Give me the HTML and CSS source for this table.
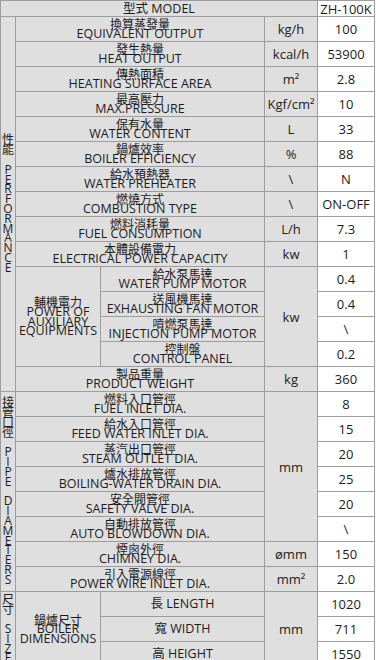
FILE: index.html
```html
<!DOCTYPE html>
<html lang="zh-Hant">
<head>
<meta charset="utf-8">
<title>型式 MODEL ZH-100K</title>
<link rel="stylesheet" href="styles.css">
</head>
<body>
<div class="sheet">
  <div class="cell model span-c4">型式 MODEL</div>
  <div class="cell val model-val">ZH-100K</div>

  <div class="cell side rows-perf">性<br>能<br><br>P<br>E<br>R<br>F<br>O<br>R<br>M<br>A<br>N<br>C<br>E</div>
  <div class="cell label span-c2"><span class="zh">換算蒸發量</span><span class="en">EQUIVALENT OUTPUT</span></div>
  <div class="cell unit">kg/h</div>
  <div class="cell val">100</div>

  <div class="cell label span-c2"><span class="zh">發生熱量</span><span class="en">HEAT OUTPUT</span></div>
  <div class="cell unit">kcal/h</div>
  <div class="cell val">53900</div>

  <div class="cell label span-c2"><span class="zh">傳熱面積</span><span class="en">HEATING SURFACE AREA</span></div>
  <div class="cell unit">m²</div>
  <div class="cell val">2.8</div>

  <div class="cell label span-c2"><span class="zh">最高壓力</span><span class="en">MAX.PRESSURE</span></div>
  <div class="cell unit">Kgf/cm²</div>
  <div class="cell val">10</div>

  <div class="cell label span-c2"><span class="zh">保有水量</span><span class="en">WATER CONTENT</span></div>
  <div class="cell unit">L</div>
  <div class="cell val">33</div>

  <div class="cell label span-c2"><span class="zh">鍋爐效率</span><span class="en">BOILER EFFICIENCY</span></div>
  <div class="cell unit">%</div>
  <div class="cell val">88</div>

  <div class="cell label span-c2"><span class="zh">給水預熱器</span><span class="en">WATER PREHEATER</span></div>
  <div class="cell unit">\</div>
  <div class="cell val">N</div>

  <div class="cell label span-c2"><span class="zh">燃燒方式</span><span class="en">COMBUSTION TYPE</span></div>
  <div class="cell unit">\</div>
  <div class="cell val">ON-OFF</div>

  <div class="cell label span-c2"><span class="zh">燃料消耗量</span><span class="en">FUEL CONSUMPTION</span></div>
  <div class="cell unit">L/h</div>
  <div class="cell val">7.3</div>

  <div class="cell label span-c2"><span class="zh">本體設備電力</span><span class="en">ELECTRICAL POWER CAPACITY</span></div>
  <div class="cell unit">kw</div>
  <div class="cell val">1</div>

  <div class="cell group rows-4"><span class="zh">輔機電力</span><span class="en">POWER OF</span><span class="en">AUXILIARY</span><span class="en">EQUIPMENTS</span></div>
  <div class="cell label"><span class="zh">給水泵馬達</span><span class="en">WATER PUMP MOTOR</span></div>
  <div class="cell unit rows-4">kw</div>
  <div class="cell val">0.4</div>

  <div class="cell label"><span class="zh">送風機馬達</span><span class="en">EXHAUSTING FAN MOTOR</span></div>
  <div class="cell val">0.4</div>

  <div class="cell label"><span class="zh">噴燃泵馬達</span><span class="en">INJECTION PUMP MOTOR</span></div>
  <div class="cell val">\</div>

  <div class="cell label"><span class="zh">控制盤</span><span class="en">CONTROL PANEL</span></div>
  <div class="cell val">0.2</div>

  <div class="cell label span-c2"><span class="zh">製品重量</span><span class="en">PRODUCT WEIGHT</span></div>
  <div class="cell unit">kg</div>
  <div class="cell val">360</div>

  <div class="cell side rows-pipe">接<br>管<br>口<br>徑<br><br>P<br>I<br>P<br>E<br><br>D<br>I<br>A<br>M<br>E<br>T<br>E<br>R<br>S</div>
  <div class="cell label span-c2"><span class="zh">燃料入口管徑</span><span class="en">FUEL INLET DIA.</span></div>
  <div class="cell unit rows-6">mm</div>
  <div class="cell val">8</div>

  <div class="cell label span-c2"><span class="zh">給水入口管徑</span><span class="en">FEED WATER INLET DIA.</span></div>
  <div class="cell val">15</div>

  <div class="cell label span-c2"><span class="zh">蒸汽出口管徑</span><span class="en">STEAM OUTLET DIA.</span></div>
  <div class="cell val">20</div>

  <div class="cell label span-c2"><span class="zh">爐水排放管徑</span><span class="en">BOILING-WATER DRAIN DIA.</span></div>
  <div class="cell val">25</div>

  <div class="cell label span-c2"><span class="zh">安全閥管徑</span><span class="en">SAFETY VALVE DIA.</span></div>
  <div class="cell val">20</div>

  <div class="cell label span-c2"><span class="zh">自動排放管徑</span><span class="en">AUTO BLOWDOWN DIA.</span></div>
  <div class="cell val">\</div>

  <div class="cell label span-c2"><span class="zh">煙囪外徑</span><span class="en">CHIMNEY DIA.</span></div>
  <div class="cell unit">ømm</div>
  <div class="cell val">150</div>

  <div class="cell label span-c2"><span class="zh">引入電源線徑</span><span class="en">POWER WIRE INLET DIA.</span></div>
  <div class="cell unit">mm²</div>
  <div class="cell val">2.0</div>

  <div class="cell side rows-3">尺<br>寸<br><br>S<br>I<br>Z<br>E</div>
  <div class="cell group rows-3"><span class="zh">鍋爐尺寸</span><span class="en">BOILER</span><span class="en">DIMENSIONS</span></div>
  <div class="cell label single">長 LENGTH</div>
  <div class="cell unit rows-3">mm</div>
  <div class="cell val">1020</div>

  <div class="cell label single">寬 WIDTH</div>
  <div class="cell val">711</div>

  <div class="cell label single">高 HEIGHT</div>
  <div class="cell val">1550</div>
</div>
</body>
</html>
```

FILE: styles.css
```css
* {
  box-sizing: border-box;
}

html, body {
  margin: 0;
  padding: 0;
  background: #ffffff;
}

body {
  font-family: "Open Sans", "Noto Sans CJK TC", sans-serif;
  color: #1c1c1c;
}

.sheet {
  display: grid;
  grid-template-columns: 15px 85px 164px 53px 57px;
  grid-template-rows: 16px repeat(26, 25px);
  width: 375px;
  border-top: 1px solid #9d9d9d;
  border-left: 1px solid #9d9d9d;
}

.cell {
  display: flex;
  flex-direction: column;
  align-items: center;
  justify-content: center;
  text-align: center;
  background: #dfdfdf;
  border-right: 1px solid #9d9d9d;
  border-bottom: 1px solid #9d9d9d;
  white-space: nowrap;
  overflow: visible;
  min-width: 0;
}

.span-c4 { grid-column: span 4; }
.span-c2 { grid-column: span 2; }
.rows-perf { grid-row: span 15; }
.rows-pipe { grid-row: span 8; }
.rows-6 { grid-row: span 6; }
.rows-4 { grid-row: span 4; }
.rows-3 { grid-row: span 3; }

.model {
  font-size: 12.5px;
  line-height: 14px;
}

.val {
  background: #ffffff;
  font-size: 13px;
  line-height: 16px;
}

.model-val {
  font-size: 13px;
  line-height: 14px;
}

.unit {
  font-size: 13px;
  line-height: 16px;
}

.label, .group {
  font-size: 12.5px;
}

.label .zh, .label .en {
  display: block;
  line-height: 10.5px;
}

.group .zh, .group .en {
  display: block;
  line-height: 9.6px;
}

.zh {
  font-family: "Noto Sans CJK TC", sans-serif;
  font-size: 12px;
}

.label.single {
  font-size: 12.5px;
  line-height: 16px;
}

.side {
  font-size: 12px;
  line-height: 9.8px;
  font-family: "Open Sans", "Noto Sans CJK TC", sans-serif;
}
```
